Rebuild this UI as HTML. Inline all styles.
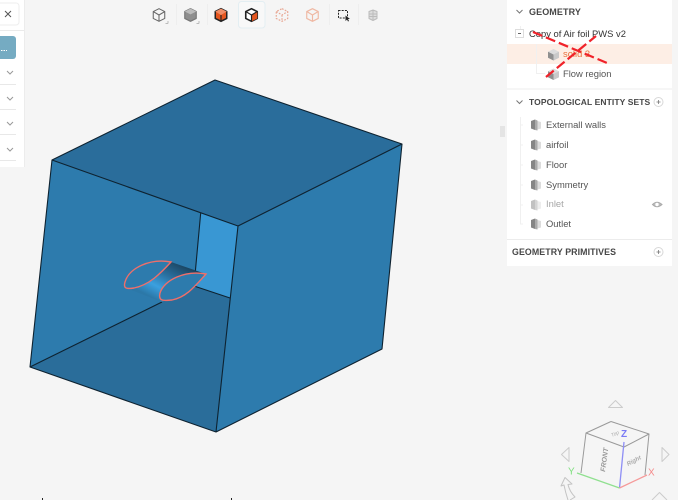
<!DOCTYPE html>
<html><head><meta charset="utf-8">
<style>
html,body{margin:0;padding:0;width:678px;height:500px;overflow:hidden;background:#f5f5f5;font-family:"Liberation Sans",sans-serif}
.abs{position:absolute}
#stage{position:absolute;left:0;top:0}
.t{position:absolute;white-space:nowrap;font-size:9.4px;color:#555;line-height:12px}
.h{position:absolute;white-space:nowrap;font-size:9px;font-weight:bold;color:#474747;line-height:12px;letter-spacing:.1px}
</style></head>
<body>
<svg id="stage" width="678" height="500" viewBox="0 0 678 500">
<defs>
<linearGradient id="af" gradientUnits="userSpaceOnUse" x1="183" y1="264" x2="163" y2="303">
<stop offset="0" stop-color="#1a435e"/><stop offset=".4" stop-color="#2a70a0"/><stop offset=".72" stop-color="#3aa0e0"/><stop offset="1" stop-color="#2c78a8"/>
</linearGradient>
<g id="cube3"><path d="M0 -5.500L5.500 -2.700V3.200L0 6L-5.500 3.200V-2.700Z" fill="#dcdcdc"/><path d="M-5.500 -2.700L0 0V6L-5.500 3.200Z" fill="#8f8f8f"/><path d="M0 0L5.500 -2.700V3.200L0 6Z" fill="#c9c9c9"/></g>
<g id="set"><path d="M-5 -4L-1 -5.500V5L-5 3.500Z" fill="#858585"/><path d="M-1 -5.500L1.500 -4.500V5.500L-1 5Z" fill="#aaa"/><path d="M1.500 -4L5 -3V3.500L1.500 4.500Z" fill="#dcdcdc"/></g>
</defs>

<!-- model -->
<path d="M52 160L215 80L402 144L238 226Z" fill="#2a6d9b"/>
<path d="M238 226L402 144L382 349L216 432Z" fill="#2d7bad"/>
<path d="M52 160L238 226L216 432L30 367Z" fill="#2d7bad"/>
<path d="M30 367L162 302L194 286L230 298L216 432Z" fill="#2a6d9a"/>
<path d="M200.700 213L238 226L230 298L194 286Z" fill="#3997d3"/>
<path d="M52 160L215 80L402 144L382 349L216 432L30 367Z" fill="none" stroke="#0e2230" stroke-width="1.100" stroke-linejoin="round"/>
<path d="M52 160L238 226L216 432M238 226L402 144M200.700 213L194 286M194 286L230 298M30 367L162 302" fill="none" stroke="#0e2230" stroke-width="1.100"/>
<!-- airfoil -->
<path d="M171 262L206 274L162 302L126 288Z" fill="url(#af)"/>
<path d="M171 262C150 258 129 268 125 282C123 289 127 289 134 288C149 285 160 274 171 262Z" fill="#2d7bad" stroke="#ef6f6a" stroke-width="1.400"/>
<path d="M206 274C185 270 164 280 160 293C158 301 163 301 172 300C187 297 196 285 206 274Z" fill="#2d7bad" stroke="#ef6f6a" stroke-width="1.400"/>
<path d="M42.500 498V500M231.500 498V500" stroke="#222" stroke-width="1"/>

<!-- left panel -->
<rect x="-10" y="-2" width="34" height="169" fill="#fff"/>
<rect x="24" y="0" width="1" height="167" fill="#ececec"/>
<rect x="-6" y="3" width="25" height="22" rx="3" fill="#fff" stroke="#eee"/>
<path d="M5 11L11 17M11 11L5 17" stroke="#555" stroke-width="1"/>
<rect x="0" y="30" width="24" height="1" fill="#eaeaea"/>
<rect x="-6" y="36" width="22" height="23" rx="3" fill="#75abc2"/>
<path d="M1 50.500H7" stroke="#fff" stroke-width="1" stroke-dasharray="1.500 1"/>
<path d="M0 84.500H16M0 109.500H16M0 134.500H16M0 160.500H16" stroke="#e8e8e8"/>
<path d="M7 71L10 74L13 71M7 97L10 100L13 97M7 122L10 125L13 122M7 148L10 151L13 148" fill="none" stroke="#999" stroke-width="1"/>

<!-- toolbar -->
<rect x="238.500" y="1.500" width="26.500" height="26.500" rx="3" fill="#f8f8f8" stroke="#e3eef2"/>
<path d="M176.500 4V25M207.500 4V25M329.500 4V25M358.500 4V25" stroke="#eeeeee"/>
<g fill="none" stroke-linejoin="round">
<g transform="translate(159,15) scale(1.150)" stroke="#666" stroke-width=".9"><path d="M0 -5.500L5 -3V3L0 5.500L-5 3V-3ZM-5 -3L0 0L5 -3M0 0V5.500"/></g>
<path d="M168 23.500H165.500M168 23.500V21M199 23.500H196.500M199 23.500V21" stroke="#bbb"/>
<g transform="translate(190.500,15) scale(1.150)"><path d="M0 -5.500L5 -3V3L0 5.500L-5 3V-3Z" fill="#8e8e8e" stroke="#777"/><path d="M-5 -3L0 -0.500L5 -3L0 -5.500Z" fill="#bbb"/></g>
<g transform="translate(221,15) scale(1.150)"><path d="M0 -5.500L5 -3V3L0 5.500L-5 3V-3Z" fill="#e5561f" stroke="#222" stroke-width="1.300"/><path d="M-5 -3L0 0L5 -3L0 -5.500Z" fill="#f08d66"/><path d="M0 0V5.500" stroke="#222"/></g>
<g transform="translate(251.500,15) scale(1.150)"><path d="M0 -5.500L5 -3V3L0 5.500L-5 3V-3Z" fill="#fff" stroke="#222" stroke-width="1.400"/><path d="M0 0L5 -3V3L0 5.500Z" fill="#e5561f"/><path d="M-5 -3L0 0L5 -3M0 0V5.500" stroke="#222"/></g>
<g transform="translate(282,15) scale(1.150)" stroke="#e8a793" stroke-width="1"><path d="M0 -5.500L5 -3V3L0 5.500L-5 3V-3ZM-5 -3L0 0L5 -3M0 0V5.500" stroke-dasharray="1.500 1.200"/></g>
<g transform="translate(312.500,15) scale(1.150)" stroke="#efb8a3" stroke-width="1"><path d="M0 -5.500L5 -3V3L0 5.500L-5 3V-3ZM-5 -3L0 0L5 -3M0 0V5.500"/></g>
<rect x="338.500" y="10.500" width="9" height="7.500" stroke="#222" stroke-dasharray="2 1.200"/>
<path d="M345.500 15.500V21L347 19.500L348 21.500L349 21L348 19H350Z" fill="#222"/>
<g transform="translate(373,15)" stroke="#bbb" stroke-width="1"><path d="M0 -5L4 -3.500V3.500L0 5.500L-4 3.500V-3.500ZM-4 -1H4M-4 1.500H4M0 -5V5.500" fill="#ddd"/></g>
</g>

<!-- right panel -->
<rect x="507" y="-2" width="165" height="268" fill="#fff"/>
<rect x="507" y="44" width="165" height="20" fill="#fdeee5"/>
<rect x="507" y="88.500" width="165" height="1" fill="#ececec"/>
<rect x="507" y="239" width="165" height="1" fill="#ececec"/>
<rect x="500" y="126" width="5" height="11" fill="#e4e4e4"/>
<path d="M516.500 10L519.500 13L522.500 10M516.500 100.500L519.500 103.500L522.500 100.500" fill="none" stroke="#777"/>
<path d="M520.500 26V29M536.500 44V73.500H545M520.500 117V224H523M520 145H523M520 165H523M520 185H523M520 205H523M520 125H523" fill="none" stroke="#f0f0f0"/>
<rect x="515.500" y="29.500" width="8" height="8" fill="#fff" stroke="#ddd"/>
<path d="M518 33.500H521" stroke="#666"/>
<use href="#cube3" x="553.500" y="54.500"/>
<use href="#cube3" x="553.500" y="74"/>
<use href="#set" x="536" y="125"/>
<use href="#set" x="536" y="145"/>
<use href="#set" x="536" y="165"/>
<use href="#set" x="536" y="185"/>
<g opacity=".5"><use href="#set" x="536" y="205"/></g>
<use href="#set" x="536" y="224"/>
<circle cx="658.500" cy="102" r="4.500" fill="#fff" stroke="#d8d8d8"/>
<path d="M656.500 102H660.500M658.500 100V104" stroke="#777" stroke-width=".8"/>
<circle cx="658.500" cy="252" r="4.500" fill="#fff" stroke="#d8d8d8"/>
<path d="M656.500 252H660.500M658.500 250V254" stroke="#777" stroke-width=".8"/>
<path d="M652.500 204.500Q657 200 662 204.500Q657 209 652.500 204.500Z" fill="#bbb" stroke="#aaa"/>
<circle cx="657" cy="204.500" r="1.700" fill="#fff"/>

<!-- gizmo -->
<g fill="none" stroke-linejoin="round">
<path d="M608.500 407.500L615.500 400.500L622.500 407.500Z" stroke="#ccc"/>
<path d="M569 447.500V461.500L561.500 454.500Z" stroke="#ccc"/>
<path d="M662 447.500V461.500L669 454.500Z" stroke="#ccc"/>
<path d="M652 500L659.500 492.500L667 500" stroke="#ccc"/>
<path d="M611 421.500L586 433L581 473M611 421.500L649 434L645 475M586 433L624 447L649 434" stroke="#999" stroke-width="1"/>
<path d="M624 442L619.500 488" stroke="#8f8ff5" stroke-width="1.300"/>
<path d="M577 473L619.500 488" stroke="#90e090" stroke-width="1.300"/>
<path d="M619.500 488L647 475" stroke="#f59a9a" stroke-width="1.300"/>
<path d="M568 500C566 494 565 490 564 485L561 486L565 477.500L572 484L568 484.500C569 489 572 494 575 497L570 500" stroke="#c4c4c4" stroke-width="1"/>
</g>
<text x="621" y="437" font-family="Liberation Sans" font-size="10" font-weight="bold" fill="#7a7af5">Z</text>
<text x="568" y="474.500" font-family="Liberation Sans" font-size="10" fill="#7fe07f">Y</text>
<text x="648" y="475.500" font-family="Liberation Sans" font-size="10" fill="#f58a8a">X</text>
<text font-family="Liberation Sans" font-size="7" fill="#999" font-weight="bold" transform="translate(605,472) rotate(-82)" font-style="italic">FRONT</text>
<text font-family="Liberation Sans" font-size="6" fill="#aaa" font-weight="bold" transform="translate(628,466) rotate(-28)" font-style="italic">Right</text>
<text font-family="Liberation Sans" font-size="5" fill="#aaa" transform="translate(612,437) rotate(-25)" font-style="italic">Top</text>
</svg>

<div class="h" style="left:529px;top:5.500px">GEOMETRY</div>
<div class="t" style="left:529px;top:28px;color:#333">Copy of Air foil PWS v2</div>
<div class="t" style="left:563px;top:48px;color:#e8703c">solid 3</div>
<div class="t" style="left:563px;top:68px">Flow region</div>
<div class="h" style="left:529px;top:96px;font-size:8.500px">TOPOLOGICAL ENTITY SETS</div>
<div class="t" style="left:546px;top:119px">Externall walls</div>
<div class="t" style="left:546px;top:139px">airfoil</div>
<div class="t" style="left:546px;top:159px">Floor</div>
<div class="t" style="left:546px;top:179px">Symmetry</div>
<div class="t" style="left:546px;top:198px;color:#a5a5a5">Inlet</div>
<div class="t" style="left:546px;top:218px">Outlet</div>
<div class="h" style="left:512px;top:246px;font-size:8.800px">GEOMETRY PRIMITIVES</div>

<svg class="abs" style="left:0;top:0" width="678" height="500">
<path d="M533 32L607 63M546 77L596 36" stroke="#f0222a" stroke-width="2.200" stroke-dasharray="10 4" fill="none"/>
</svg>
</body></html>
